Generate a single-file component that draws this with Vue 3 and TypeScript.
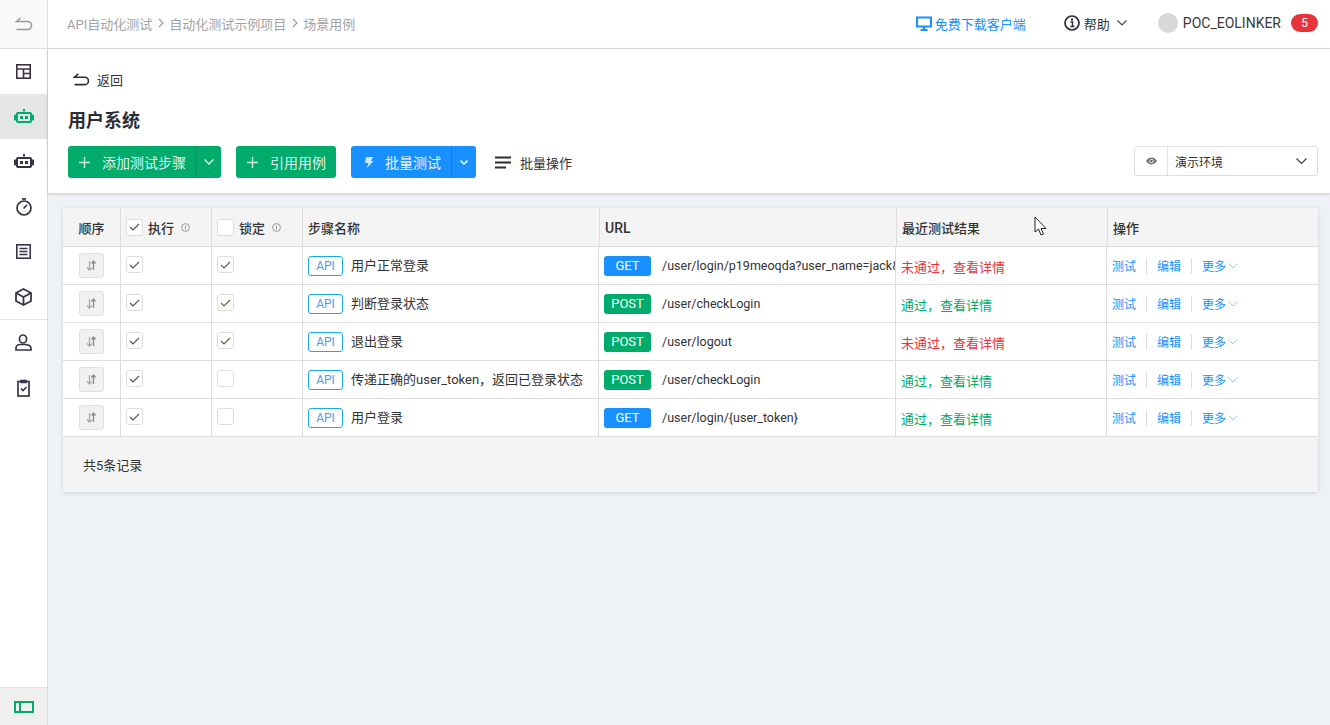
<script setup lang="ts">
interface Row {
  name: string
  method: 'GET' | 'POST'
  url: string
  passed: boolean
  locked: boolean
}
const rows: Row[] = [
  { name: '用户正常登录', method: 'GET', url: '/user/login/p19meoqda?user_name=jack&user_password=123456', passed: false, locked: true },
  { name: '判断登录状态', method: 'POST', url: '/user/checkLogin', passed: true, locked: true },
  { name: '退出登录', method: 'POST', url: '/user/logout', passed: false, locked: true },
  { name: '传递正确的user_token，返回已登录状态', method: 'POST', url: '/user/checkLogin', passed: true, locked: false },
  { name: '用户登录', method: 'GET', url: '/user/login/{user_token}', passed: true, locked: false },
]
</script>

<template>
  <div class="app">
    <aside class="side">
      <div class="side-top">
        <svg width="18" height="14" viewBox="0 0 18 14" fill="none" stroke="#9a9a9a" stroke-width="1.6"><path d="M5.5 1 1.5 4.5h11a4 4 0 0 1 0 8H1.5" /></svg>
      </div>
      <div class="side-item">
        <svg width="15" height="15" viewBox="0 0 15 15" fill="none" stroke="#3a3347" stroke-width="1.6"><rect x=".8" y=".8" width="13.4" height="13.4" /><path d="M1 5h13M7.5 5v9M7.5 9.5H14" /></svg>
      </div>
      <div class="side-item active">
        <svg width="20" height="15" viewBox="0 0 20 15"><rect x="9" y="0" width="2" height="2.5" fill="#00ab6c" /><rect x="2" y="3" width="16" height="11" rx="2" fill="#00ab6c" /><rect x="0" y="5.5" width="20" height="6" rx="1" fill="#00ab6c" /><rect x="4" y="5" width="12" height="7" fill="#e5e6e8" /><rect x="6" y="7" width="3" height="3" fill="#00ab6c" /><rect x="11" y="7" width="3" height="3" fill="#00ab6c" /></svg>
      </div>
      <div class="side-item">
        <svg width="20" height="15" viewBox="0 0 20 15"><rect x="9" y="0" width="2" height="2.5" fill="#3a3347" /><rect x="2" y="3" width="16" height="11" rx="2" fill="#3a3347" /><rect x="0" y="5.5" width="20" height="6" rx="1" fill="#3a3347" /><rect x="4" y="5" width="12" height="7" fill="#fff" /><rect x="6" y="7" width="3" height="3" fill="#3a3347" /><rect x="11" y="7" width="3" height="3" fill="#3a3347" /></svg>
      </div>
      <div class="side-item">
        <svg width="16" height="18" viewBox="0 0 16 18" fill="none" stroke="#3a3347" stroke-width="1.7"><circle cx="8" cy="10" r="7" /><path d="M6 1h4" /><path d="M7.5 10.5 11 7" /></svg>
      </div>
      <div class="side-item">
        <svg width="15" height="15" viewBox="0 0 15 15" fill="none" stroke="#3a3347" stroke-width="1.6"><rect x=".8" y=".8" width="13.4" height="13.4" /><path d="M3.5 4.5h8M3.5 7.5h8M3.5 10.5h8" /></svg>
      </div>
      <div class="side-item">
        <svg width="17" height="18" viewBox="0 0 17 18" fill="none" stroke="#3a3347" stroke-width="1.8"><path d="M8.5 1 16 5v8l-7.5 4L1 13V5z" /><path d="M1 5l7.5 4L16 5M8.5 9v8" /></svg>
      </div>
      <div class="side-sep"></div>
      <div class="side-item">
        <svg width="17" height="17" viewBox="0 0 17 17" fill="none" stroke="#3a3347" stroke-width="1.7"><rect x="4.5" y="1" width="7" height="8" rx="3.5" /><path d="M1 16v-2c0-2 2-3.500 4-3.500h5c3 0 6 1.500 6 3.500v2z" /></svg>
      </div>
      <div class="side-item">
        <svg width="13" height="18" viewBox="0 0 13 18" fill="none" stroke="#3a3347" stroke-width="1.7"><rect x="1" y="2.500" width="11" height="14.500" /><path d="M4 1.500h5v2H4z" fill="#3a3347" /><path d="M4 9.500 6 11.500 9.500 8" /></svg>
      </div>
      <div class="side-bottom">
        <svg width="20" height="12" viewBox="0 0 20 12" fill="none" stroke="#00ab6c" stroke-width="2"><rect x="1" y="1" width="18" height="10" /><path d="M6 1v10" /></svg>
      </div>
    </aside>

    <div class="main">
      <header class="top">
        <nav class="crumbs">
          <span>API自动化测试</span>
          <svg class="crumb-arrow" width="6" height="10" viewBox="0 0 6 10" fill="none" stroke="#999" stroke-width="1.100"><path d="m1 1 4 4-4 4" /></svg>
          <span>自动化测试示例项目</span>
          <svg class="crumb-arrow" width="6" height="10" viewBox="0 0 6 10" fill="none" stroke="#999" stroke-width="1.100"><path d="m1 1 4 4-4 4" /></svg>
          <span>场景用例</span>
        </nav>
        <div class="top-right">
          <a class="download">
            <svg width="16" height="15" viewBox="0 0 16 15" fill="none" stroke="#1890ff" stroke-width="2"><rect x="1" y="1.500" width="14" height="9" /><path d="M8 11v2.500M4.500 14h7" /></svg>
            <span>免费下载客户端</span>
          </a>
          <div class="help">
            <svg width="16" height="16" viewBox="0 0 16 16" fill="none"><circle cx="8" cy="8" r="7" stroke="#2c2c35" stroke-width="1.700" /><rect x="7" y="3.500" width="2" height="2" fill="#2c2c35" /><path d="M6.500 7H8.500V11.500M6.500 11.500h4" stroke="#2c2c35" stroke-width="1.500" /></svg>
            <span>帮助</span>
            <svg width="10" height="6" viewBox="0 0 10 6" fill="none" stroke="#444" stroke-width="1.100"><path d="m.5.500 4.500 4.500 4.500-4.500" /></svg>
          </div>
          <div class="avatar"></div>
          <span class="user">POC_EOLINKER</span>
          <span class="badge">5</span>
        </div>
      </header>

      <section class="panel">
        <div class="back">
          <svg width="17" height="13" viewBox="0 0 18 14" fill="none" stroke="#2c2c35" stroke-width="1.700"><path d="M5.500 1 1.500 4.500h11a4 4 0 0 1 0 8H1.500" /></svg>
          <span>返回</span>
        </div>
        <h1 class="title">用户系统</h1>
        <div class="toolbar">
          <div class="btn green">
            <span class="btn-main">
              <svg class="plus" width="11" height="11" viewBox="0 0 11 11" stroke="#cfeee3" stroke-width="1.400"><path d="M5.500 0v11M0 5.500h11" /></svg>
              <span class="add-label">添加测试步骤</span>
            </span>
            <span class="btn-arrow">
              <svg width="10" height="6" viewBox="0 0 10 6" fill="none" stroke="#d7f1e7" stroke-width="1.500"><path d="m.500.500 4.500 4.500 4.500-4.500" /></svg>
            </span>
          </div>
          <div class="btn green quote">
            <span class="btn-main">
              <svg class="plus" width="11" height="11" viewBox="0 0 11 11" stroke="#cfeee3" stroke-width="1.400"><path d="M5.500 0v11M0 5.500h11" /></svg>
              <span class="add-label">引用用例</span>
            </span>
          </div>
          <div class="btn blue">
            <span class="btn-main">
              <svg class="bolt" width="10" height="11" viewBox="0 0 10 11" fill="#cfe6ff"><path d="M2 0h7L7 4h2.500L3 11l1.500-5H1z" /></svg>
              <span class="add-label">批量测试</span>
            </span>
            <span class="btn-arrow">
              <svg width="8" height="5" viewBox="0 0 8 5" fill="none" stroke="#e6f2ff" stroke-width="1.600"><path d="m.500.500 3.500 3.500 3.500-3.500" /></svg>
            </span>
          </div>
          <div class="bulk">
            <svg width="16" height="13" viewBox="0 0 16 13" stroke="#2c2c35" stroke-width="2"><path d="M0 1.500h16M0 6.500h16M0 11.500h11" /></svg>
            <span>批量操作</span>
          </div>
          <div class="env">
            <span class="env-eye">
              <svg width="11" height="8" viewBox="0 0 12 8"><path d="M0 4c3-5 9-5 12 0-3 5-9 5-12 0z" fill="#7a7480" /><circle cx="6" cy="4" r="2.300" fill="#fff" /><circle cx="6" cy="4" r="1.300" fill="#544c5c" /></svg>
            </span>
            <span class="env-name">演示环境</span>
            <svg width="11" height="6" viewBox="0 0 11 6" fill="none" stroke="#444" stroke-width="1.200"><path d="m.500.500 5 5 5-5" /></svg>
          </div>
        </div>
      </section>

      <section class="card">
        <div class="thead">
          <div class="th center">顺序</div>
          <div class="th">
            <span class="check head checked"><svg width="11" height="8" viewBox="0 0 11 8" fill="none" stroke="#555" stroke-width="1.200"><path d="m1 4 3 3 6-6" /></svg></span>
            <span class="th-label">执行</span>
            <svg class="th-info" width="9" height="9" viewBox="0 0 9 9" fill="none" stroke="#999"><circle cx="4.500" cy="4.500" r="3.900" /><path d="M4.500 2.500v4" /></svg>
          </div>
          <div class="th">
            <span class="check head"></span>
            <span class="th-label">锁定</span>
            <svg class="th-info" width="9" height="9" viewBox="0 0 9 9" fill="none" stroke="#999"><circle cx="4.500" cy="4.500" r="3.900" /><path d="M4.500 2.500v4" /></svg>
          </div>
          <div class="th">步骤名称</div>
          <div class="th url-head">URL</div>
          <div class="th">最近测试结果</div>
          <div class="th last">操作</div>
        </div>

        <div v-for="row in rows" :key="row.name" class="tr">
          <div class="td center">
            <span class="drag">
              <svg width="11" height="13" viewBox="0 0 11 13" fill="none" stroke-width="1.300"><path d="M3.500 2v9M1 8.500 3.500 11 6 8.500" stroke="#a9a9a9" /><path d="M7.500 11V2M5.500 4.500 7.500 2l2 2.500" stroke="#8a8a8a" /></svg>
            </span>
          </div>
          <div class="td">
            <span class="check"><svg width="11" height="8" viewBox="0 0 11 8" fill="none" stroke="#555" stroke-width="1.200"><path d="m1 4 3 3 6-6" /></svg></span>
          </div>
          <div class="td">
            <span class="check"><svg v-if="row.locked" width="11" height="8" viewBox="0 0 11 8" fill="none" stroke="#7c5a3a" stroke-width="1.200"><path d="m1 4 3 3 6-6" /></svg></span>
          </div>
          <div class="td name">
            <span class="api">API</span>
            <span class="name-text">{{ row.name }}</span>
          </div>
          <div class="td url">
            <span class="method" :class="row.method === 'GET' ? 'get' : 'post'">{{ row.method }}</span>
            <span class="url-text">{{ row.url }}</span>
          </div>
          <div class="td result" :class="row.passed ? 'pass' : 'fail'">
            {{ row.passed ? '通过，查看详情' : '未通过，查看详情' }}
          </div>
          <div class="td ops last">
            <a>测试</a><i></i><a>编辑</a><i></i><a>更多</a>
            <svg width="10" height="6" viewBox="0 0 10 6" fill="none" stroke="#a9c4f2" stroke-width="1"><path d="m.500.500 4.500 4.500 4.500-4.500" /></svg>
          </div>
        </div>

        <div class="tfoot">共5条记录</div>
      </section>
    </div>

    <svg class="cursor" width="14" height="20" viewBox="0 0 14 20"><path d="M1 1v15l3.500-3 2.500 6 2.500-1-2.500-5.500H12z" fill="#fff" stroke="#222" stroke-width="1" /></svg>
  </div>
</template>

<style scoped>
.app {
  position: relative;
  display: flex;
  height: 725px;
  overflow: hidden;
  background: #eef1f5;
  color: #333;
  font-family: Roboto, "Noto Sans CJK SC", sans-serif;
  font-size: 13px;
}
.side {
  flex: 0 0 48px;
  box-sizing: border-box;
  display: flex;
  flex-direction: column;
  background: #fff;
  border-right: 1px solid #ddd;
}
.side-top {
  height: 49px;
  box-sizing: border-box;
  flex: none;
  display: flex;
  align-items: center;
  justify-content: center;
  background: #f9f9f8;
  border-bottom: 1px solid #ddd;
}
.side-item {
  height: 45px;
  flex: none;
  display: flex;
  align-items: center;
  justify-content: center;
}
.side-item.active {
  background: #e5e6e8;
}
.side-sep {
  height: 1px;
  flex: none;
  background: #e4e4e4;
}
.side-bottom {
  margin-top: auto;
  height: 38px;
  display: flex;
  align-items: center;
  justify-content: center;
  background: #f0f0f0;
  border-top: 1px solid #e2e2e2;
  box-sizing: border-box;
}
.main {
  flex: 1;
  min-width: 0;
  display: flex;
  flex-direction: column;
}
.top {
  height: 49px;
  flex: none;
  box-sizing: border-box;
  display: flex;
  align-items: center;
  padding: 0 12px 2px 19px;
  background: #fff;
  border-bottom: 1px solid #ddd;
}
.crumbs {
  display: flex;
  align-items: center;
  color: #a3a3a3;
  font-size: 13px;
}
.crumb-arrow {
  margin: 0 5px 0 6px;
}
.top-right {
  margin-left: auto;
  display: flex;
  align-items: center;
}
.download {
  display: flex;
  align-items: center;
  gap: 3px;
  color: #1890ff;
}
.help {
  margin-left: 38px;
  display: flex;
  align-items: center;
  gap: 4px;
  color: #333;
}
.help svg:last-child {
  margin-left: 3px;
}
.avatar {
  margin-left: 31px;
  width: 20px;
  height: 20px;
  border-radius: 50%;
  background: #d8d8d8;
}
.user {
  margin-left: 5px;
  font-size: 14px;
  color: #3a3a3a;
}
.badge {
  margin-left: 10px;
  width: 27px;
  height: 18px;
  border-radius: 9px;
  background: #e8333a;
  color: #fff;
  font-size: 12px;
  line-height: 18px;
  text-align: center;
}
.panel {
  height: 144px;
  flex: none;
  box-sizing: border-box;
  padding: 18px 12px 15px 20px;
  background: #fff;
  box-shadow: 0 1px 3px rgba(0, 0, 0, 0.18);
  position: relative;
}
.back {
  height: 24px;
  display: flex;
  align-items: center;
  gap: 7px;
  padding-left: 5px;
  color: #333;
}
.title {
  margin: 17px 0 12px;
  height: 26px;
  font-size: 18px;
  line-height: 26px;
  font-weight: 700;
  color: #2c2c35;
}
.toolbar {
  display: flex;
  height: 32px;
}
.btn {
  display: flex;
  height: 32px;
  border-radius: 3px;
  color: #dff5ec;
  font-size: 14px;
  overflow: hidden;
}
.btn.green {
  background: #00ab6c;
  width: 153px;
}
.btn.blue {
  background: #1890ff;
  width: 125px;
  margin-left: 15px;
  color: #eaf4ff;
}
.btn.quote {
  width: 100px;
  margin-left: 15px;
}
.btn-main {
  flex: 1;
  display: flex;
  align-items: center;
  padding-left: 11px;
}
.plus {
  margin-right: 12px;
}
.bolt {
  margin: 0 11px 0 2px;
}
.btn-arrow {
  flex: 0 0 24px;
  display: flex;
  align-items: center;
  justify-content: center;
  border-left: 1px solid rgba(0, 0, 0, 0.14);
}
.bulk {
  margin-left: 19px;
  display: flex;
  align-items: center;
  gap: 9px;
  color: #333;
}
.env {
  margin-left: auto;
  width: 184px;
  height: 30px;
  box-sizing: border-box;
  display: flex;
  align-items: center;
  border: 1px solid #ddd;
  border-radius: 3px;
  padding-right: 10px;
}
.env-eye {
  flex: 0 0 32px;
  height: 100%;
  display: flex;
  align-items: center;
  justify-content: center;
  border-right: 1px solid #e2e2e2;
}
.env-name {
  flex: 1;
  padding-left: 7px;
  font-size: 12px;
  color: #333;
}
.card {
  margin: 15px 12px 0 15px;
  background: #fff;
  box-shadow: 0 1px 4px rgba(0, 0, 0, 0.14);
}
.thead,
.tr {
  display: grid;
  border-bottom: 1px solid #ddd;
}
.thead {
  grid-template-columns: 58px 91px 91px 297px 297px 211px 1fr;
  height: 39px;
  box-sizing: border-box;
  background: #f4f4f4;
}
.tr {
  grid-template-columns: 58px 91px 91px 296px 297px 211px 1fr;
  height: 38px;
  box-sizing: border-box;
}
.th,
.td {
  box-sizing: border-box;
  display: flex;
  align-items: center;
  padding-left: 5px;
  border-right: 1px solid #ddd;
  min-width: 0;
  white-space: nowrap;
  overflow: hidden;
}
.th {
  color: #333;
  font-weight: 500;
  padding-top: 1px;
}
.th.center,
.td.center {
  justify-content: center;
  padding-left: 0;
}
.th.last,
.td.last {
  border-right: 0;
}
.url-head {
  font-size: 14px;
}
.th-label {
  margin-left: 5px;
}
.th-info {
  margin-left: 7px;
}
.check {
  width: 17px;
  height: 17px;
  box-sizing: border-box;
  display: inline-flex;
  align-items: center;
  justify-content: center;
  flex: none;
  border: 1px solid #ddd;
  border-radius: 3px;
  background: #fff;
  margin-bottom: 2px;
}
.check.head {
  margin-bottom: 1px;
}
.drag {
  width: 25px;
  height: 25px;
  box-sizing: border-box;
  display: flex;
  align-items: center;
  justify-content: center;
  border: 1px solid #e0e0e0;
  border-radius: 3px;
  background: #f1f1f1;
}
.api {
  flex: none;
  width: 35px;
  height: 20px;
  box-sizing: border-box;
  border: 1px solid #1ba8ee;
  border-radius: 3px;
  color: #4a9df0;
  font-size: 12px;
  line-height: 18px;
  text-align: center;
}
.name-text {
  margin-left: 8px;
  color: #333;
  margin-bottom: 2px;
}
.method {
  flex: none;
  width: 47px;
  height: 20px;
  border-radius: 3px;
  color: #fff;
  line-height: 20px;
  text-align: center;
}
.method.get {
  background: #1890ff;
}
.method.post {
  background: #00ab6c;
}
.url-text {
  margin-left: 11px;
  color: #333;
  font-size: 12.500px;
  margin-bottom: 1px;
}
.result {
  padding-top: 2px;
}
.pass {
  color: #00ab6c;
}
.fail {
  color: #e8333a;
}
.ops {
  font-size: 12px;
  color: #1890ff;
}
.ops i {
  width: 1px;
  height: 16px;
  background: #ddd;
  margin: 0 10px;
}
.ops svg {
  margin-left: 2px;
}
.tfoot {
  height: 55px;
  box-sizing: border-box;
  display: flex;
  align-items: center;
  padding-left: 20px;
  background: #f4f4f4;
  color: #333;
}
.cursor {
  position: absolute;
  left: 1034px;
  top: 216px;
}
</style>

<style>
html,
body {
  margin: 0;
  background: #eef1f5;
}
</style>
